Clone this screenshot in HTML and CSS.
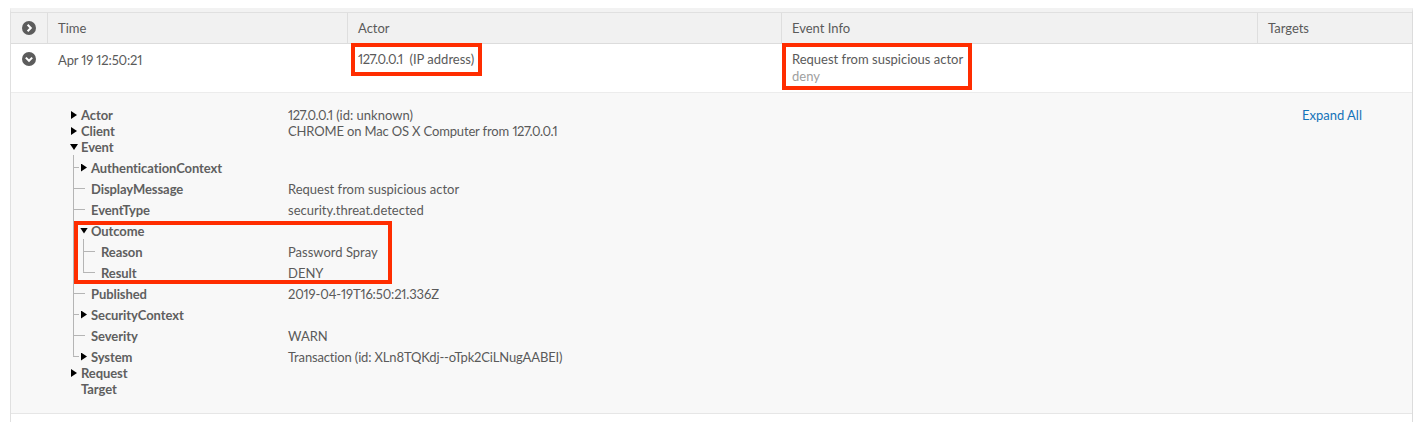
FILE: index.html
```html
<!DOCTYPE html>
<html lang="en">
<head>
<meta charset="utf-8">
<title>Event log</title>
<link rel="stylesheet" href="styles.css">
</head>
<body>
<div class="table">
  <div class="grid head">
    <div class="cell icon-cell"><svg class="chev" viewBox="0 0 14 14"><circle cx="7" cy="7" r="7"/><path d="M5.6 3.8 8.8 7 5.6 10.2"/></svg></div>
    <div class="cell">Time</div>
    <div class="cell">Actor</div>
    <div class="cell">Event Info</div>
    <div class="cell">Targets</div>
  </div>
  <div class="grid row">
    <div class="cell icon-cell"><svg class="chev" viewBox="0 0 14 14"><circle cx="7" cy="7" r="7"/><path d="M3.8 5.6 7 8.8 10.2 5.6"/></svg></div>
    <div class="cell time tight">Apr 19 12:50:21</div>
    <div class="cell actor"><span class="mark mark-actor"><span class="num">127.0.0.1</span>&nbsp; (IP address)</span></div>
    <div class="cell info"><span class="mark mark-info">Request from suspicious actor<span class="sub">deny</span></span></div>
    <div class="cell"></div>
  </div>
  <div class="detail">
    <a class="expand" href="#">Expand All</a>
    <div class="line top"><i class="caret right"></i><b class="key">Actor</b><span><span class="num">127.0.0.1</span> (id: unknown)</span></div>
    <div class="line top"><i class="caret right"></i><b class="key">Client</b><span><span class="tight">CHROME on Mac OS X Computer from</span> <span class="num">127.0.0.1</span></span></div>
    <div class="line top"><i class="caret down"></i><b class="key">Event</b></div>
    <ul class="tree">
      <li><div class="line"><i class="caret right"></i><b class="key">AuthenticationContext</b></div></li>
      <li><div class="line"><i class="caret"></i><b class="key">DisplayMessage</b><span>Request from suspicious actor</span></div></li>
      <li><div class="line"><i class="caret"></i><b class="key">EventType</b><span>security.threat.detected</span></div></li>
      <li class="outcome">
        <div class="line"><i class="caret down"></i><b class="key">Outcome</b></div>
        <ul class="tree inner">
          <li><div class="line"><i class="caret"></i><b class="key">Reason</b><span>Password Spray</span></div></li>
          <li><div class="line"><i class="caret"></i><b class="key">Result</b><span>DENY</span></div></li>
        </ul>
      </li>
      <li><div class="line"><i class="caret"></i><b class="key">Published</b><span class="tight">2019-04-19T16:50:21.336Z</span></div></li>
      <li><div class="line"><i class="caret right"></i><b class="key">SecurityContext</b></div></li>
      <li><div class="line"><i class="caret"></i><b class="key">Severity</b><span>WARN</span></div></li>
      <li><div class="line"><i class="caret right"></i><b class="key">System</b><span class="tight">Transaction (id: XLn8TQKdj--oTpk2CiLNugAABEI)</span></div></li>
    </ul>
    <div class="line top"><i class="caret right"></i><b class="key">Request</b></div>
    <div class="line top"><i class="caret"></i><b class="key">Target</b></div>
  </div>
</div>
</body>
</html>
```
FILE: styles.css
```css
*, *::before, *::after { box-sizing: border-box; }
html, body { margin: 0; background: #fff; }
body {
  padding: 8px 7px 0 10px;
  font: 13px/16px Lato, "Liberation Sans", sans-serif;
  font-variant-numeric: proportional-nums;
  color: #5a5a5a;
}
.num { letter-spacing: -.45px; }
.tight { letter-spacing: -.15px; }
.table {
  height: 414px;
  border-left: 1px solid #e0e0e0;
  border-right: 1px solid #dcdcdc;
  border-top: 4px solid #f2f2f2;
  background: #fff;
}
.grid {
  display: grid;
  grid-template-columns: 36px 300px 434px 476px 155px;
}
.head {
  height: 32px;
  background: #f1f1f1;
  border-top: 1px solid #e0e0e0;
  border-bottom: 1px solid #dcdcdc;
}
.head .cell {
  padding: 7px 0 0 10px;
  border-left: 1px solid #dedede;
}
.head .cell:first-child { border-left: 0; }
.head .cell.icon-cell, .row .cell.icon-cell { padding: 0; display: flex; justify-content: center; }
.head .cell.icon-cell { align-items: center; }
.row .cell.icon-cell { padding: 8px 0 0; }
.row {
  height: 49px;
  background: #fff;
  border-bottom: 1px solid #ececec;
}
.chev { width: 14px; height: 14px; display: block; }
.chev circle { fill: #5c5c5c; }
.chev path { fill: none; stroke: #fff; stroke-width: 2; }
.row .cell { padding-left: 11px; position: relative; }
.row .time { padding-top: 8px; }
.row .actor, .row .info { padding-top: 7px; }
.sub { display: block; margin-top: 1px; color: #a0a0a0; }
.mark { display: block; position: relative; }
.mark::after {
  content: "";
  position: absolute;
  border: 4px solid #ff2d00;
}
.mark-actor::after { left: -7px; top: -8px; width: 131px; height: 33px; }
.mark-info::after { left: -10px; top: -8px; width: 190px; height: 47px; }
.detail {
  position: relative;
  background: #f8f8f8;
  height: 321px;
  border-bottom: 1px solid #e6e6e6;
  padding: 14px 0 0 60px;
}
.expand {
  position: absolute;
  right: 50px;
  top: 14px;
  color: #1473b8;
  text-decoration: none;
}
.line {
  display: flex;
  align-items: center;
  height: 16px;
}
.caret {
  flex: none;
  width: 10px;
  height: 7px;
  font-style: normal;
}
.caret.right { background: #000; width: 6px; margin-right: 4px; clip-path: polygon(0 0, 100% 50%, 0 100%); height: 8px; }
.caret.down { background: #000; width: 8px; margin-left: -1px; margin-right: 3px; clip-path: polygon(0 0, 100% 0, 50% 100%); height: 6px; }
.key { font-weight: 700; flex: none; width: 207px; color: #5f5f5f; letter-spacing: -.08px; }
ul.tree { list-style: none; margin: 2px 0 -2px 2px; padding: 0 0 0 8px; }
.tree li { position: relative; }
.tree .line { height: 21px; }
.tree .key { width: 197px; }
ul.tree.inner { margin: 0 0 0 2px; }
.tree.inner .key { width: 187px; }
.tree > li::before {
  content: "";
  position: absolute;
  left: -8px;
  top: 0;
  bottom: 0;
  width: 12px;
  border-left: 1px solid #b5b5b5;
}
.tree > li:first-child::before { top: -2px; }
.tree > li:last-child::before { bottom: auto; height: 11px; border-bottom-left-radius: 2px; }
.tree > li::after {
  content: "";
  position: absolute;
  left: -8px;
  top: 10px;
  width: 12px;
  border-top: 1px solid #b5b5b5;
}
.tree > li:has(> .line .caret.right)::after { width: 6px; }
.tree > li.outcome::after { display: none; }
.outcome > .line { position: relative; }
.outcome > .line::after {
  content: "";
  position: absolute;
  left: -7px;
  top: 1px;
  width: 318px;
  height: 63px;
  border: 4px solid #ff2d00;
}
```
